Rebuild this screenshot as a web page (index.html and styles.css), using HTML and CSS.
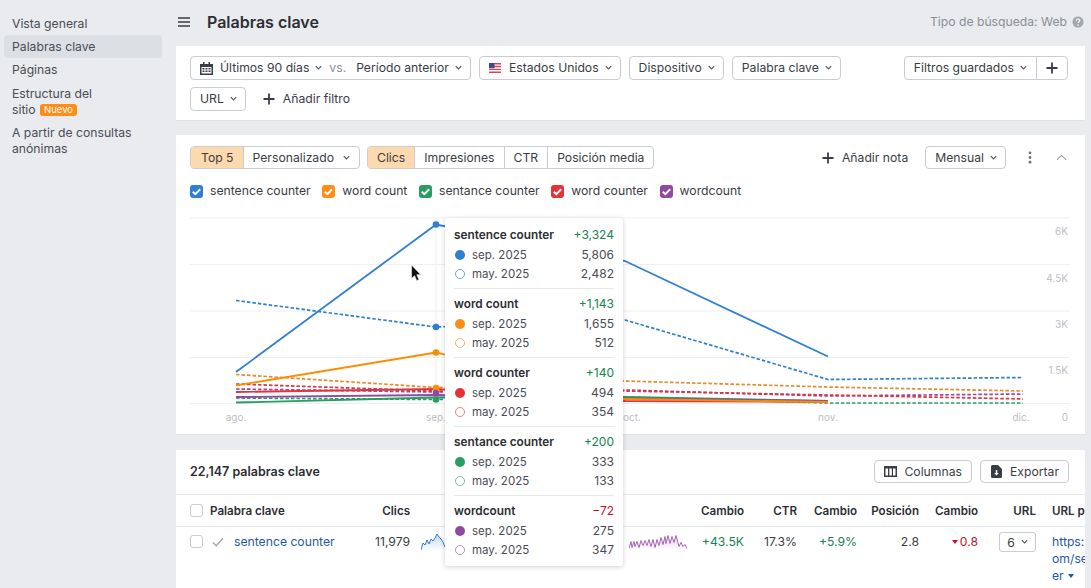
FILE: index.html
```html
<!DOCTYPE html>
<html lang="es">
<head>
<meta charset="utf-8">
<title>Palabras clave</title>
<link rel="stylesheet" href="styles.css">
</head>
<body>
<svg class="defs" width="0" height="0" aria-hidden="true">
  <symbol id="chev" viewBox="0 0 7 6"><path d="M.8 1.200 3.500 4 6.200 1.200" fill="none" stroke="currentColor" stroke-width="1.200"/></symbol>
  <symbol id="plus" viewBox="0 0 12 12"><path d="M6 .5v11M.5 6h11" fill="none" stroke="currentColor" stroke-width="1.800"/></symbol>
  <symbol id="tick" viewBox="0 0 13 13"><path d="M2.800 6.800 5.300 9.200 10.200 4.200" fill="none" stroke="#fff" stroke-width="2"/></symbol>
</svg>
<div class="app">
  <nav class="sidebar">
    <a class="nav-item">Vista general</a>
    <a class="nav-item active">Palabras clave</a>
    <a class="nav-item">Páginas</a>
    <a class="nav-item multi">Estructura del<br>sitio <span class="badge">Nuevo</span></a>
    <a class="nav-item multi">A partir de consultas anónimas</a>
  </nav>
  <main class="main">
    <header class="topbar">
      <svg class="burger" viewBox="0 0 12 10"><path d="M0 1h12M0 5h12M0 9h12" stroke="#3a3d45" stroke-width="1.600"/></svg>
      <h1 class="title">Palabras clave</h1>
      <div class="search-type">Tipo de búsqueda: Web
        <svg class="help" viewBox="0 0 12 12"><circle cx="6" cy="6" r="5.500" fill="#a3a6ad"/><path d="M4.300 4.700c0-2.200 3.500-2.200 3.500-.2 0 1.200-1.800 1.200-1.800 2.600" fill="none" stroke="#fff" stroke-width="1.200"/><circle cx="6" cy="9" r=".8" fill="#fff"/></svg>
      </div>
    </header>

    <section class="panel filters">
      <div class="filter-row">
        <div class="btn">
          <svg class="ico-cal" viewBox="0 0 13 13"><path d="M0 2h13v11H0z" fill="#3a3d45"/><path d="M3 0h1.500v3H3zM8.500 0H10v3H8.500z" fill="#3a3d45"/><path d="M1.500 5h10v6.500h-10z" fill="#fff"/><path d="M2.500 6h2v1.500h-2zM5.500 6h2v1.500h-2zM8.500 6h2v1.500h-2zM2.500 8.500h2V10h-2zM5.500 8.500h2V10h-2zM8.500 8.500h2V10h-2z" fill="#3a3d45"/></svg>
          <span>Últimos 90 días</span><svg class="chev"><use href="#chev"/></svg>
          <span class="vs">vs.</span>
          <span>Período anterior</span><svg class="chev"><use href="#chev"/></svg>
        </div>
        <div class="btn">
          <svg class="flag" viewBox="0 0 12 10"><path d="M0 0h12v10H0z" fill="#fff"/><path d="M0 0h12v1.400H0zM0 2.800h12v1.400H0zM0 5.700h12v1.400H0zM0 8.600h12V10H0z" fill="#d8434f"/><path d="M0 0h5.500v5.200H0z" fill="#3f4a85"/></svg>
          <span>Estados Unidos</span><svg class="chev"><use href="#chev"/></svg>
        </div>
        <div class="btn"><span>Dispositivo</span><svg class="chev"><use href="#chev"/></svg></div>
        <div class="btn"><span>Palabra clave</span><svg class="chev"><use href="#chev"/></svg></div>
        <div class="btn-group saved">
          <div class="seg"><span>Filtros guardados</span><svg class="chev"><use href="#chev"/></svg></div>
          <div class="seg seg-plus"><svg class="plus"><use href="#plus"/></svg></div>
        </div>
      </div>
      <div class="filter-row">
        <div class="btn"><span>URL</span><svg class="chev"><use href="#chev"/></svg></div>
        <div class="ghost"><svg class="plus"><use href="#plus"/></svg><span>Añadir filtro</span></div>
      </div>
    </section>

    <section class="panel chart-panel">
      <div class="chart-tools">
        <div class="btn-group wide">
          <div class="seg on">Top 5</div>
          <div class="seg"><span>Personalizado</span><svg class="chev"><use href="#chev"/></svg></div>
        </div>
        <div class="btn-group">
          <div class="seg on">Clics</div>
          <div class="seg">Impresiones</div>
          <div class="seg">CTR</div>
          <div class="seg">Posición media</div>
        </div>
        <div class="tools-right">
          <div class="ghost"><svg class="plus"><use href="#plus"/></svg><span>Añadir nota</span></div>
          <div class="btn btn-tall"><span>Mensual</span><svg class="chev"><use href="#chev"/></svg></div>
          <svg class="dots" viewBox="0 0 4 14"><circle cx="2" cy="2" r="1.500"/><circle cx="2" cy="7" r="1.500"/><circle cx="2" cy="12" r="1.500"/></svg>
          <svg class="collapse" viewBox="0 0 12 7"><path d="M1 6 6 1.500 11 6" fill="none" stroke="#a3a6ad" stroke-width="1.300"/></svg>
        </div>
      </div>
      <div class="legend">
        <label class="leg"><svg class="cb blue"><use href="#tick"/></svg>sentence counter</label>
        <label class="leg"><svg class="cb orange"><use href="#tick"/></svg>word count</label>
        <label class="leg"><svg class="cb green"><use href="#tick"/></svg>sentance counter</label>
        <label class="leg"><svg class="cb red"><use href="#tick"/></svg>word counter</label>
        <label class="leg"><svg class="cb purple"><use href="#tick"/></svg>wordcount</label>
      </div>
      <svg class="chart" viewBox="176 205 909 229" width="909" height="229">
        <g class="grid">
          <path d="M190 218H1070M190 264.500H1070M190 311H1070M190 357.500H1070M190 403.500H1070"/>
          <path d="M436 218V403.500"/>
        </g>
        <g class="axis">
          <text x="236" y="421" text-anchor="middle">ago.</text>
          <text x="436" y="421" text-anchor="middle">sep.</text>
          <text x="632" y="421" text-anchor="middle">oct.</text>
          <text x="828" y="421" text-anchor="middle">nov.</text>
          <text x="1021" y="421" text-anchor="middle">dic.</text>
          <text x="1068" y="235" text-anchor="end">6K</text>
          <text x="1068" y="282" text-anchor="end">4.5K</text>
          <text x="1068" y="328" text-anchor="end">3K</text>
          <text x="1068" y="374" text-anchor="end">1.5K</text>
          <text x="1068" y="421" text-anchor="end">0</text>
        </g>
        <g class="dash">
          <polyline stroke="#e8892a" points="236,374.500 436,387.500 625,381 828,387 1023,391"/>
          <polyline stroke="#a0449e" points="236,389 436,392 625,390 828,396 1023,394"/>
          <polyline stroke="#e0343c" points="236,384 436,391 625,391 828,395 1023,399"/>
          <polyline stroke="#2a9d62" points="236,398 436,399.500 625,397 828,403 1023,403"/>
          <polyline stroke="#2f7fd1" points="236,300.500 436,327 625,320 828,379.500 1023,377.500"/>
        </g>
        <g class="solid">
          <polyline stroke="#2a9d62" points="236,402.500 436,397.500 625,397 828,401"/>
          <polyline stroke="#e0343c" points="236,392 436,389 625,401 828,402"/>
          <polyline stroke="#8f4aa0" points="236,397 436,395 625,398.500 828,401"/>
          <polyline stroke="#ff8c00" points="236,385.500 436,352.500 625,399 828,402"/>
          <polyline stroke="#2f7fd1" points="236,372 436,224.500 625,261 828,356.500"/>
        </g>
        <g>
          <circle cx="436" cy="224.500" r="3.300" fill="#2f7fd1"/>
          <circle cx="436" cy="327" r="3.300" fill="#2f7fd1"/>
          <circle cx="436" cy="352.500" r="3.300" fill="#ff8c00"/>
          <circle cx="436" cy="388" r="3.300" fill="#ff8c00"/>
          <circle cx="436" cy="399.500" r="3.300" fill="#2a9d62"/>
          <circle cx="436" cy="393" r="3.300" fill="#8f4aa0"/>
        </g>
        <path class="cursor" d="M411.500 265v13.500l3-2.800 2.300 5 2.200-1-2.200-5h4z"/>
      </svg>
    </section>

    <section class="panel table-panel">
      <div class="table-head">
        <h2 class="table-title">22,147 palabras clave</h2>
        <div class="btn btn-tall">
          <svg class="ico-col" viewBox="0 0 13 11"><path d="M0 0h13v11H0z" fill="#3a3d45"/><path d="M1.500 2.500h2.500v7H1.500zM5.300 2.500h2.500v7H5.300zM9 2.500h2.500v7H9z" fill="#fff"/></svg>
          <span>Columnas</span>
        </div>
        <div class="btn btn-tall">
          <svg class="ico-exp" viewBox="0 0 11 13"><path d="M0 1.500A1.500 1.500 0 0 1 1.500 0H7l4 4v7.500A1.500 1.500 0 0 1 9.500 13h-8A1.500 1.500 0 0 1 0 11.500z" fill="#3a3d45"/><path d="M4.800 5h1.500v3h1.500L5.500 10.500 3.200 8h1.600z" fill="#fff"/></svg>
          <span>Exportar</span>
        </div>
      </div>
      <div class="tr th">
        <div class="kw"><span class="box"></span>Palabra clave</div>
        <div class="r">Clics</div>
        <div></div>
        <div></div>
        <div></div>
        <div></div>
        <div class="r">Cambio</div>
        <div class="r">CTR</div>
        <div class="r">Cambio</div>
        <div class="r">Posición</div>
        <div class="r">Cambio</div>
        <div class="r">URL</div>
        <div class="url">URL p</div>
      </div>
      <div class="tr td">
        <div class="kw"><span class="box"></span>
          <svg class="check" viewBox="0 0 12 10"><path d="M1 5.500 4.200 8.800 11 1.200" fill="none" stroke="#a3a6ad" stroke-width="1.400"/></svg>
          <a class="link">sentence counter</a></div>
        <div class="r">11,979</div>
        <div class="spark-cell"><svg class="spark" viewBox="0 0 58 18"><defs><linearGradient id="bf" x1="0" y1="0" x2="0" y2="1"><stop offset="0" stop-color="#2f7fd1" stop-opacity=".3"/><stop offset="1" stop-color="#2f7fd1" stop-opacity="0"/></linearGradient></defs><path d="M0 17 2 10 4 12 6 7 8 11 10 6 12 8 14 5 16 1 18 4 20 6 22 9 24 14 58 14V18H0z" fill="url(#bf)"/><polyline fill="none" stroke="#2f7fd1" points="0,17 2,10 4,12 6,7 8,11 10,6 12,8 14,5 16,1 18,4 20,6 22,9 24,14 26,9 28,12 30,7 32,10 34,5 36,9 38,6 40,10 42,8 44,12 46,7 48,11 50,9 52,13 54,10 56,14 58,15"/></svg></div>
        <div></div>
        <div></div>
        <div class="spark-cell right"><svg class="spark" viewBox="0 0 58 17"><defs><linearGradient id="pf" x1="0" y1="0" x2="0" y2="1"><stop offset="0" stop-color="#a765b5" stop-opacity=".3"/><stop offset="1" stop-color="#a765b5" stop-opacity="0"/></linearGradient></defs><path d="M0 15 2 8 3 14 5 8 6 13 8 8 10 14 12 7 14 12 16 7 18 12 20 6 22 13 24 6 26 14 28 6 30 12 32 4 34 11 36 3 37 10 39 2 41 10 43 3 45 9 47 2 49 9 50 13 52 9 54 13 56 11 58 15V17H0z" fill="url(#pf)"/><polyline fill="none" stroke="#a765b5" points="0,15 2,8 3,14 5,8 6,13 8,8 10,14 12,7 14,12 16,7 18,12 20,6 22,13 24,6 26,14 28,6 30,12 32,4 34,11 36,3 37,10 39,2 41,10 43,3 45,9 47,2 49,9 50,13 52,9 54,13 56,11 58,15"/></svg></div>
        <div class="r pos">+43.5K</div>
        <div class="r">17.3%</div>
        <div class="r pos">+5.9%</div>
        <div class="r">2.8</div>
        <div class="r neg"><span class="down"></span>0.8</div>
        <div class="r"><span class="mini">6<svg class="chev"><use href="#chev"/></svg></span></div>
        <div class="url"><a class="link">https:<br>om/se<br>er <span class="caret"></span></a></div>
      </div>
    </section>

    <aside class="tooltip">
      <div class="tt-group">
        <div class="tt-row tt-title"><b>sentence counter</b><span class="pos">+3,324</span></div>
        <div class="tt-row"><i class="dot blue"></i><span>sep. 2025</span><span class="val">5,806</span></div>
        <div class="tt-row"><i class="ring ring-blue"></i><span>may. 2025</span><span class="val">2,482</span></div>
      </div>
      <div class="tt-group">
        <div class="tt-row tt-title"><b>word count</b><span class="pos">+1,143</span></div>
        <div class="tt-row"><i class="dot orange"></i><span>sep. 2025</span><span class="val">1,655</span></div>
        <div class="tt-row"><i class="ring ring-orange"></i><span>may. 2025</span><span class="val">512</span></div>
      </div>
      <div class="tt-group">
        <div class="tt-row tt-title"><b>word counter</b><span class="pos">+140</span></div>
        <div class="tt-row"><i class="dot red"></i><span>sep. 2025</span><span class="val">494</span></div>
        <div class="tt-row"><i class="ring ring-red"></i><span>may. 2025</span><span class="val">354</span></div>
      </div>
      <div class="tt-group">
        <div class="tt-row tt-title"><b>sentance counter</b><span class="pos">+200</span></div>
        <div class="tt-row"><i class="dot green"></i><span>sep. 2025</span><span class="val">333</span></div>
        <div class="tt-row"><i class="ring ring-green"></i><span>may. 2025</span><span class="val">133</span></div>
      </div>
      <div class="tt-group">
        <div class="tt-row tt-title"><b>wordcount</b><span class="neg">−72</span></div>
        <div class="tt-row"><i class="dot purple"></i><span>sep. 2025</span><span class="val">275</span></div>
        <div class="tt-row"><i class="ring ring-purple"></i><span>may. 2025</span><span class="val">347</span></div>
      </div>
    </aside>
  </main>
</div>
</body>
</html>
```

FILE: styles.css
```css
* { box-sizing: border-box; }
html, body { margin: 0; height: 100%; overflow: hidden; }
body {
  background: #e9ebee;
  color: #3a3d45;
  font: 12.2px/16px Inter, "Liberation Sans", sans-serif;
}
.defs { position: absolute; }
svg { display: block; flex: none; }
.app { display: flex; height: 588px; overflow: hidden; }

/* Sidebar */
.sidebar { width: 176px; flex: none; padding: 12px 14px 0 4px; display: flex; flex-direction: column; }
.nav-item { display: block; padding: 4px 8px 3px; height: 23px; border-radius: 4px; color: #4a4d55; }
.nav-item.active { background: #dcdfe4; }
.nav-item.multi { height: auto; padding: 5px 8px 3px; }
.nav-item.multi:last-child { padding-top: 4px; }
.badge { display: inline-block; background: #ff8c14; color: #fff; font-size: 9.500px; line-height: 12px; padding: 0 4px; border-radius: 3px; vertical-align: 1px; margin-left: 1px; }

/* Main */
.main { position: relative; width: 909px; flex: none; }
.topbar { height: 46px; display: flex; align-items: center; padding-right: 1px; padding-bottom: 2px; }
.burger { width: 12px; height: 10px; margin-left: 2px; margin-right: 17px; }
.title { margin: 0; font-size: 16px; line-height: 20px; font-weight: 600; color: #2c2e34; }
.search-type { margin-left: auto; display: flex; align-items: center; gap: 5px; color: #8b8e96; }
.help { width: 12px; height: 12px; }

.panel { background: #fff; border-bottom: 1px solid #dfe1e5; }
.filters { height: 75px; padding: 10px 14px 0; display: flex; flex-direction: column; gap: 7px; }
.filter-row { display: flex; gap: 8px; align-items: center; }

.btn { height: 24px; display: flex; align-items: center; border: 1px solid #c9ccd2; border-radius: 4px; padding: 0 8px 0 9px; gap: 6px; background: #fff; white-space: nowrap; }
.btn-tall { height: 23px; }
.chev { width: 7px; height: 6px; color: #555861; }
.vs { color: #8b8e96; margin: 0 4px 0 1px; }
.ico-cal { width: 13px; height: 13px; margin-right: 1px; }
.flag { width: 12px; height: 10px; margin-right: 2px; }
.plus { width: 12px; height: 12px; color: #3a3d45; }
.ghost { display: flex; align-items: center; gap: 8px; white-space: nowrap; padding-left: 9px; }

.btn-group { display: flex; border: 1px solid #c9ccd2; border-radius: 4px; height: 24px; overflow: hidden; background: #fff; }
.seg { display: flex; align-items: center; gap: 6px; padding: 0 9px; border-left: 1px solid #c9ccd2; white-space: nowrap; }
.seg:first-child { border-left: 0; }
.seg.on { background: #fdd9ae; }
.wide .seg { gap: 9px; }
.wide .seg:first-child { padding-left: 10px; }
.saved { margin-left: auto; margin-right: 3px; }
.seg-plus { padding: 0 9px; }

/* Chart panel */
.chart-panel { margin-top: 14px; height: 300px; padding: 11px 0 0; position: relative; }
.chart-tools { display: flex; align-items: center; gap: 7px; padding: 0 14px; height: 23px; }
.chart-tools .btn-group { height: 23px; }
.tools-right { margin-left: auto; display: flex; align-items: center; }
.tools-right .ghost { padding: 0; gap: 8px; margin-right: 17px; }
.dots { width: 4px; height: 13px; fill: #6e7179; margin-left: 22px; }
.collapse { width: 11px; height: 7px; margin-left: 24px; margin-right: 4px; }
.legend { display: flex; gap: 11.700px; padding: 0 14px; margin-top: 14px; height: 16px; }
.leg { display: flex; align-items: center; gap: 7px; white-space: nowrap; }
.cb { width: 13px; height: 13px; border-radius: 3px; }
.blue { background: #2f7fd1; }
.orange { background: #ff8c14; }
.green { background: #2a9d62; }
.red { background: #e8323a; }
.purple { background: #8f4aa0; }
.chart { margin-top: 6px; }
.grid path { fill: none; stroke: #eeeff1; stroke-width: 1; }
.axis text { font-size: 10px; fill: #bcbec4; font-family: Inter, sans-serif; }
.dash polyline { fill: none; stroke-width: 1.700; stroke-dasharray: 3.500 2; }
.solid polyline { fill: none; stroke-width: 1.800; }
.cursor { fill: #111; stroke: #fff; stroke-width: .6; }

/* Table */
.table-panel { margin-top: 15px; height: 150px; overflow: hidden; border-bottom: 0; }
.table-head { height: 45px; display: flex; align-items: center; gap: 8px; padding: 0 16px 1px 14px; border-bottom: 1px solid #e4e6e9; }
.table-title { margin: 0 auto 0 0; font-size: 12.500px; line-height: 16px; font-weight: 600; color: #2c2e34; }
.table-head .btn { gap: 7px; padding: 0 9px; }
.ico-col { width: 13px; height: 11px; }
.ico-exp { width: 11px; height: 13px; margin-left: 1px; margin-right: 1px; }

.tr { display: grid; grid-template-columns: 170px 50px 80px 65px 67px 68px 54px 53px 60px 62px 59px 58px 1fr; padding-left: 14px; white-space: nowrap; }
.th { height: 32px; align-items: center; font-weight: 600; font-size: 11.600px; color: #2c2e34; border-bottom: 1px solid #e4e6e9; }
.td { padding-top: 6px; align-items: start; color: #3a3d45; line-height: 17px; }
.r { text-align: right; }
.kw { display: flex; align-items: center; height: 17px; }
.box { width: 13px; height: 13px; border: 1px solid #c9ccd2; border-radius: 3px; margin-right: 7px; background: #fff; }
.td .box { margin-right: 9px; }
.check { width: 12px; height: 10px; margin-right: 10px; }
.link { color: #1f5aa6; }
.url { padding-left: 16px; overflow: hidden; }
.spark-cell { padding-left: 11px; }
.spark-cell.right { padding-left: 7px; }
.spark { width: 58px; height: 18px; stroke-width: 1; }
.pos { color: #13854e; }
.neg { color: #c8102e; }
.down { display: inline-block; border: 3px solid transparent; border-top: 4px solid #c8102e; border-bottom: 0; vertical-align: 2px; margin-right: 2px; }
.caret { display: inline-block; border: 3.500px solid transparent; border-top: 4px solid #1f5aa6; border-bottom: 0; vertical-align: 2px; margin-left: 1px; }
.mini { display: inline-flex; align-items: center; justify-content: center; gap: 6px; width: 37px; height: 20px; border: 1px solid #c9ccd2; border-radius: 3px; margin-top: -1px; }

/* Tooltip */
.tooltip { position: absolute; left: 269px; top: 218px; width: 178px; height: 348px; background: #fff; border-radius: 3px; box-shadow: 0 1px 5px rgba(40,44,55,.22); padding: 2px 9px 0; }
.tt-group { height: 69px; border-bottom: 1px solid #e7e8eb; padding-top: 5px; }
.tt-group:last-child { border-bottom: 0; }
.tt-row { display: flex; align-items: center; height: 19.500px; font-size: 11.500px; color: #4a4d55; }
.tt-title { justify-content: space-between; height: 20px; font-size: 12px; }
.tt-title b { font-weight: 600; font-size: 11.800px; color: #2c2e34; }
.val { margin-left: auto; font-size: 12px; }
.dot, .ring { width: 10px; height: 10px; border-radius: 50%; margin: 0 7px 0 1px; flex: none; }
.ring { background: #fff; border: 1px solid; }
.ring-blue { border-color: #6ea3dd; }
.ring-orange { border-color: #f3b274; }
.ring-red { border-color: #ee7c82; }
.ring-green { border-color: #7dbf9e; }
.ring-purple { border-color: #b78cc2; }
```
